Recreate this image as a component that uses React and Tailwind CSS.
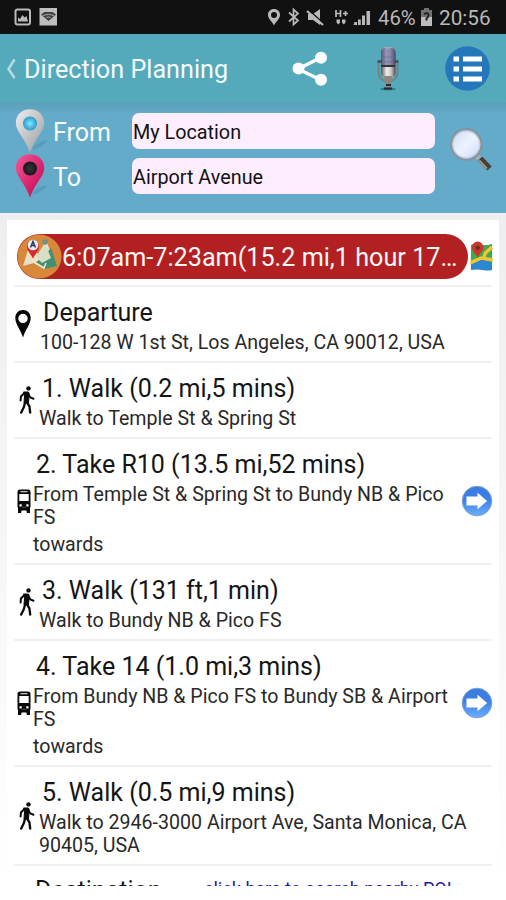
import React from 'react';

const steps = [
    { type: 'pin', title: 'Departure', lines: ['100-128 W 1st St, Los Angeles, CA 90012, USA'] },
    { type: 'walk', title: '1. Walk (0.2 mi,5 mins)', lines: ['Walk to Temple St & Spring St'] },
    { type: 'bus', title: '2. Take R10 (13.5 mi,52 mins)', lines: ['From Temple St & Spring St to Bundy NB & Pico', 'FS'] },
    { type: 'walk', title: '3. Walk (131 ft,1 min)', lines: ['Walk to Bundy NB & Pico FS'] },
    { type: 'bus', title: '4. Take 14 (1.0 mi,3 mins)', lines: ['From Bundy NB & Pico FS to Bundy SB & Airport', 'FS'] },
    { type: 'walk', title: '5. Walk (0.5 mi,9 mins)', lines: ['Walk to 2946-3000 Airport Ave, Santa Monica, CA', '90405, USA'] }
];

const PinIcon = () => (
    <svg width="16" height="28" viewBox="0 0 16 28">
        <path fillRule="evenodd" d="M8 0C3.500 0 .3 3.300.3 8c0 6 4.700 10.500 7.700 19.500 3-9 7.700-13.500 7.700-19.500C15.700 3.300 12.500 0 8 0Zm0 3.800a4.700 4.700 0 1 1 0 9.400A4.700 4.700 0 0 1 8 3.800Z" fill="#050505" />
    </svg>
);

const WalkIcon = () => (
    <svg width="16" height="28" viewBox="0 0 16 28" fill="none" stroke="#0a0a0a" strokeLinecap="round" strokeLinejoin="round">
        <circle cx="9.500" cy="2.400" r="2.200" fill="#0a0a0a" stroke="none" />
        <path d="M4.800 6h4.700l.8 2.500-.9 8.500H5l.6-8Z" fill="#0a0a0a" strokeWidth="1" />
        <path d="m5.500 7-3.600 3.500-.3 4M9 7.500l2.300 3.900 3.200 1.300" strokeWidth="2" />
        <path d="m6.200 16-1.400 5.300-2.600 5.300M8 16.300l2.400 4 .8 6.200" strokeWidth="2.300" />
    </svg>
);

const BusIcon = () => (
    <svg width="14" height="25" viewBox="0 0 14 25">
        <path fillRule="evenodd" d="M3 .5h8c1.700 0 2.500 1 2.500 2.500v15.500H.5V3C.5 1.500 1.300.5 3 .5ZM3.500 2.300v.9h7v-.9h-7ZM2.300 5v7h9.400V5H2.300Zm.2 10.200v2.200h2.200v-2.200H2.500Zm6.800 0v2.200h2.200v-2.200H9.300Z" fill="#080808" />
        <path d="M1 18h4l-.8 6H1ZM9 18h4v6H9.800ZM4 18.500h6v3H4Z" fill="#080808" />
    </svg>
);

const stepIcons = { pin: PinIcon, walk: WalkIcon, bus: BusIcon };

const ArrowButton = () => (
    <svg width="32" height="32" viewBox="0 0 32 32">
        <defs>
            <linearGradient id="arrowFill" x1="0" y1="0" x2="0" y2="1">
                <stop offset="0" stopColor="#3d7ce0" />
                <stop offset=".45" stopColor="#3c7fe6" />
                <stop offset="1" stopColor="#6aaefc" />
            </linearGradient>
        </defs>
        <circle cx="16" cy="16" r="14.800" fill="url(#arrowFill)" stroke="#7b9fd6" strokeWidth="1" />
        <path d="M5.500 11.500h11V7.700l9.700 8.300-9.700 8.300v-3.800h-11Z" fill="#fff" />
    </svg>
);

const MarkerIcon = ({ id, light, dark, dot, dotDark }) => (
    <svg width="38" height="45" viewBox="0 0 38 45">
        <defs>
            <linearGradient id={id} x1="0" y1="0" x2="1" y2="1">
                <stop offset="0" stopColor={light} />
                <stop offset="1" stopColor={dark} />
            </linearGradient>
            <radialGradient id={`${id}Dot`}>
                <stop offset="0" stopColor={dot} />
                <stop offset="1" stopColor={dotDark} />
            </radialGradient>
        </defs>
        <path d="M18 41c2-6 9-9 15-10-2 5-8 8-15 10Z" fill="#3f7f9b" opacity=".3" />
        <path d="M16 .3C8 .3 1.800 6 1.800 14c0 8.500 9.200 15 14.200 29.500 5-14.500 14.200-21 14.200-29.500C30.200 6 24 .3 16 .3Z" fill={`url(#${id})`} />
        <circle cx="16" cy="14.500" r="7" fill={`url(#${id}Dot)`} />
    </svg>
);

const StatusBar = () => (
    <div className="flex h-[34px] items-center bg-[#111] text-[#b9b9b9]">
        <svg width="45" height="20" viewBox="0 0 45 20" className="ml-[14px]">
            <rect x="1.500" y="2.500" width="14.500" height="15" rx="2" fill="none" stroke="#bababa" strokeWidth="2" />
            <path d="M4 14.500v-4l2 1.500 2.500-4 2 2.500 2-1.500 1.500 5.500Z" fill="#bababa" />
            <rect x="25.500" y="1" width="17.500" height="17.500" fill="#bebebe" />
            <path d="M27 7.500 30.500 5h8L42 7.500 34.500 14Z" fill="#3f3f3f" />
            <path d="M29 8.500q5.500-2.500 11 0M32.500 10.500q2-1 4 0" stroke="#aaa" fill="none" />
        </svg>
        <svg width="104" height="24" viewBox="0 0 104 24" className="ml-[208px] shrink-0" fill="#b9b9b9">
            <path fillRule="evenodd" d="M7 4C3.500 4 1 6.500 1 9.800c0 4 3.700 6.200 6 10.700 2.300-4.500 6-6.700 6-10.700C13 6.500 10.500 4 7 4Zm0 3a3 3 0 1 1 0 6 3 3 0 0 1 0-6Z" />
            <path d="m22 7.500 9 8-4.500 4v-15l4.500 4-9 8" fill="none" stroke="#b9b9b9" strokeWidth="1.700" />
            <path d="M41 9h5l7-5v16l-7-5h-5Z" />
            <path d="m41 4.500 16 14" stroke="#111" strokeWidth="1.500" />
            <path d="m40 6 16 14" stroke="#b9b9b9" strokeWidth="2.200" />
            <path d="M69 5v7M73.500 5v7M69 8.500h4.500M76 8.500h5M78.500 6v5" fill="none" stroke="#b9b9b9" strokeWidth="1.700" />
            <path d="M69.500 14.500h3.500v3l-1.700 2-1.800-2ZM75 14.500h3.500v3l-1.700 2-1.800-2Z" />
            <path d="M87.500 17h2.500v3h-3.500ZM91 14.500h2.800V20H91ZM95 10.500h3V20h-3ZM99.500 6h3.500v14h-3.500Z" />
        </svg>
        <span className="ml-[7px] w-[40px] pt-px text-[20.300px] leading-[34px] whitespace-nowrap">46%</span>
        <svg width="13" height="20" viewBox="0 0 13 20" className="ml-[2px] shrink-0">
            <path d="M4 1h5v2h3v16H1V3h3Z" fill="#737373" />
            <path d="M1 10h11v9H1Z" fill="#bdbdbd" />
            <path d="M4 7.500q3-3 4.500 0 .5 2-2 4v2" stroke="#242424" strokeWidth="2" fill="none" />
        </svg>
        <span className="ml-[6px] pt-px text-[20.700px] leading-[34px]">20:56</span>
    </div>
);

const Header = () => (
    <div className="flex h-[69px] items-center bg-[#54aabb] text-[#f4fbfc]">
        <svg width="10" height="22" viewBox="0 0 10 22" className="ml-[6px]">
            <path d="M8.500 1.500 2.500 11l6 9" fill="none" stroke="#b5dce2" strokeWidth="2.500" />
        </svg>
        <span className="ml-[8px] w-[268px] pt-[2px] text-[25.200px]">Direction Planning</span>
        <svg width="36" height="36" viewBox="0 0 36 36" fill="#fff">
            <path d="M29 6.500 6 18l23 11" fill="none" stroke="#fff" strokeWidth="3.500" />
            <circle cx="6.500" cy="17.500" r="6" />
            <circle cx="29" cy="6.800" r="6" />
            <circle cx="29" cy="28.800" r="6" />
        </svg>
        <svg width="24" height="48" viewBox="0 0 24 48" className="ml-[48px]">
            <defs>
                <linearGradient id="micHead">
                    <stop offset="0" stopColor="#55566e" />
                    <stop offset=".45" stopColor="#a3a5c8" />
                    <stop offset="1" stopColor="#4c4e6b" />
                </linearGradient>
                <linearGradient id="micBody">
                    <stop offset="0" stopColor="#555" />
                    <stop offset=".4" stopColor="#f3eeee" />
                    <stop offset=".7" stopColor="#cbc4c2" />
                    <stop offset="1" stopColor="#4d4d50" />
                </linearGradient>
            </defs>
            <ellipse cx="12" cy="44" rx="8" ry="1.500" fill="#347486" />
            <path d="M2.500 17v11c0 5 4 8.500 9.500 8.500s9.500-3.500 9.500-8.500V17" fill="none" stroke="#797d7c" strokeWidth="1.700" />
            <rect x="5" y="2" width="14.500" height="31" rx="5" fill="url(#micBody)" />
            <path d="M5 21V9q0-7 7-7t7.500 7v12Z" fill="url(#micHead)" />
            <path d="M5 12h14M8 17h9M12 4v17" stroke="#626480" strokeWidth="1" opacity=".6" />
            <path d="M1.500 16.500h4M18.500 16.500h4" stroke="#454858" strokeWidth="2.500" />
            <path d="M5 21h14" stroke="#34333b" strokeWidth="2" />
            <path d="M8 31h8v6l-2 3v3h-4v-4l-2-2Z" fill="#8d8783" />
            <path d="M8 43.500h8M10 40h5" stroke="#262a2c" strokeWidth="2.200" />
        </svg>
        <svg width="46" height="46" viewBox="0 0 46 46" className="ml-[45px]">
            <circle cx="22.500" cy="22.500" r="22.300" fill="#2377ba" />
            <path d="M8.500 10.500h5.500v5H8.500ZM18 10.500h19v5H18ZM8.500 20.500h5.500v5H8.500ZM18 20.500h19v5H18ZM8.500 30.500h5.500v5H8.500ZM18 30.500h19v5H18Z" fill="#fff" />
        </svg>
    </div>
);

const SearchForm = () => (
    <div className="flex h-[110px] bg-linear-to-b from-[#5c9fbb] via-[#64abc9] via-10% to-[#64abc9]">
        <div className="ml-[14px] flex w-[118px] flex-col pt-[6px]">
            <div className="flex h-[45px]">
                <MarkerIcon id="fromPin" light="#eeeeee" dark="#999b9d" dot="#8be4fc" dotDark="#239bce" />
                <span className="ml-px text-[25px] leading-[48px] text-[#f7fcfd]">From</span>
            </div>
            <div className="flex h-[46px]">
                <MarkerIcon id="toPin" light="#f4599a" dark="#c4004f" dot="#36363a" dotDark="#18181c" />
                <span className="ml-px text-[25px] leading-[47px] text-[#f7fcfd]">To</span>
            </div>
        </div>
        <div className="flex w-[303px] flex-col gap-[9px] pt-[10px] text-[19.800px] text-[#111]">
            <div className="h-[36px] rounded-[7px] bg-[#feedff] pl-px leading-[39px]">My Location</div>
            <div className="h-[36px] rounded-[7px] bg-[#feedff] pl-px leading-[39px]">Airport Avenue</div>
        </div>
        <svg width="46" height="46" viewBox="0 0 46 46" className="mt-[24px] ml-[14px]">
            <defs>
                <linearGradient id="lens" x2="1" y2="1">
                    <stop offset="0" stopColor="#cdd8f7" />
                    <stop offset=".5" stopColor="#edf3ff" />
                    <stop offset="1" stopColor="#c7d7fa" />
                </linearGradient>
            </defs>
            <path d="m28 29 11 12" stroke="#a9b0b1" strokeWidth="5" />
            <path d="m31 31.500 9.500 10" stroke="#453f3c" strokeWidth="6" />
            <path d="m30 33 8 8.500" stroke="#b9a994" strokeWidth="1.500" />
            <circle cx="17.300" cy="17.500" r="15" fill="url(#lens)" stroke="#8495a2" strokeWidth="2.800" />
            <circle cx="17.300" cy="17.500" r="13.400" fill="none" stroke="#c3d1df" strokeWidth="1.500" />
        </svg>
    </div>
);

const Summary = () => (
    <div className="flex h-[67px] items-center border-b-2 border-[#f0f0f0] pt-[7px]">
        <div className="ml-[3px] flex h-[45px] w-[451px] shrink-0 items-center rounded-full bg-[#b32022]">
            <svg width="45" height="45" viewBox="0 0 45 45" className="shrink-0">
                <circle cx="22.500" cy="22.500" r="22" fill="#d7883b" />
                <path d="m6 32 5-16 11 4 7-14 10 26-12 3-10-6Z" fill="#ebe0c4" />
                <path d="m18 29 8-6 8-9 6 18-12 3Z" fill="#438f70" />
                <path d="m22 18 6-9 6 15-9 5-5-5Z" fill="#d9dec6" />
                <path d="m17 28 10 6 2-5" fill="none" stroke="#f2ecd9" strokeWidth="1.500" />
                <path d="M16 25c-1-4-6-7-6-13a6 6 0 0 1 12 0c0 6-5 9-6 13Z" fill="#d42c35" />
                <circle cx="16" cy="11" r="5.300" fill="#e8edf3" />
                <path d="m13.500 13.500 2.500-6 2.500 6m-4-2h3" fill="none" stroke="#263a5c" strokeWidth="1.500" />
                <circle cx="28" cy="8" r="2.800" fill="#748e86" />
            </svg>
            <span className="w-[397px] truncate pt-[3px] text-[25.200px] text-[#fff8f6]">6:07am-7:23am(15.2 mi,1 hour 17 mins)</span>
        </div>
        <svg width="23" height="30" viewBox="0 0 24 30" preserveAspectRatio="none" className="ml-[2px] shrink-0">
            <path d="M1 4q6-2 12 0 5 1 10-1v26q-5 1-10 0-6-1-12 0Z" fill="#2d87ce" />
            <path d="M1 4q6-2 12 0 5 1 10-1v15l-10-1-12 4Z" fill="#43a94c" />
            <path d="m0 22 12-5 12 2M14 18l2-6 7-6" fill="none" stroke="#f3c536" strokeWidth="3.500" />
            <path d="M8 17C7 13 2 11 2 6.500a6 6 0 0 1 12 0C14 11 9 13 8 17Z" fill="#c9382c" />
            <circle cx="8" cy="6.800" r="2.300" fill="#762a24" />
        </svg>
    </div>
);

const Step = ({ step }) => {
    const Icon = stepIcons[step.type];
    const isBus = step.type === 'bus';

    return (
        <div className="flex items-stretch border-b-2 border-[#f0f0f0]">
            <div className={isBus ? 'flex w-[19px] items-center pl-[3px]' : step.type === 'walk' ? 'flex w-[25px] items-center pl-[5px]' : 'flex w-[26px] items-center pl-px'}>
                <Icon />
            </div>
            <div className={isBus ? 'h-[124px] grow pt-[9px]' : step.lines.length > 1 ? 'h-[97px] grow pt-[9px]' : 'h-[74px] grow pt-[9px]'}>
                <div className="ml-[3px] text-[25px] leading-[34px] whitespace-nowrap text-[#151515]">{step.title}</div>
                <div className="mt-px text-[19.600px] leading-[23px] whitespace-nowrap text-[#292929]">
                    {step.lines.map((line) => (
                        <div key={line}>{line}</div>
                    ))}
                    {isBus && <div className="mt-1">towards</div>}
                </div>
            </div>
            {isBus && (
                <div className="-mr-px -ml-8 flex w-8 shrink-0 items-center">
                    <ArrowButton />
                </div>
            )}
        </div>
    );
};

export default function App() {
    return (
        <div className="h-[900px] w-[506px] overflow-hidden bg-white font-[Roboto,sans-serif]">
            <StatusBar />
            <Header />
            <SearchForm />
            <div className="h-[673px] overflow-hidden bg-linear-to-b from-[#eeeef0] to-white px-[7px] pt-[7px]">
                <div className="bg-white px-[7px]">
                    <Summary />
                    {steps.map((step) => (
                        <Step key={step.title} step={step} />
                    ))}
                    <div className="flex items-baseline pt-[8px] pl-[21px] leading-[34px] whitespace-nowrap">
                        <span className="w-[169px] text-[25px] text-[#151515]">Destination</span>
                        <span className="relative -top-[4px] text-[18.100px] text-[#2116a5] underline">click here to search nearby POI</span>
                    </div>
                </div>
            </div>
        </div>
    );
}
